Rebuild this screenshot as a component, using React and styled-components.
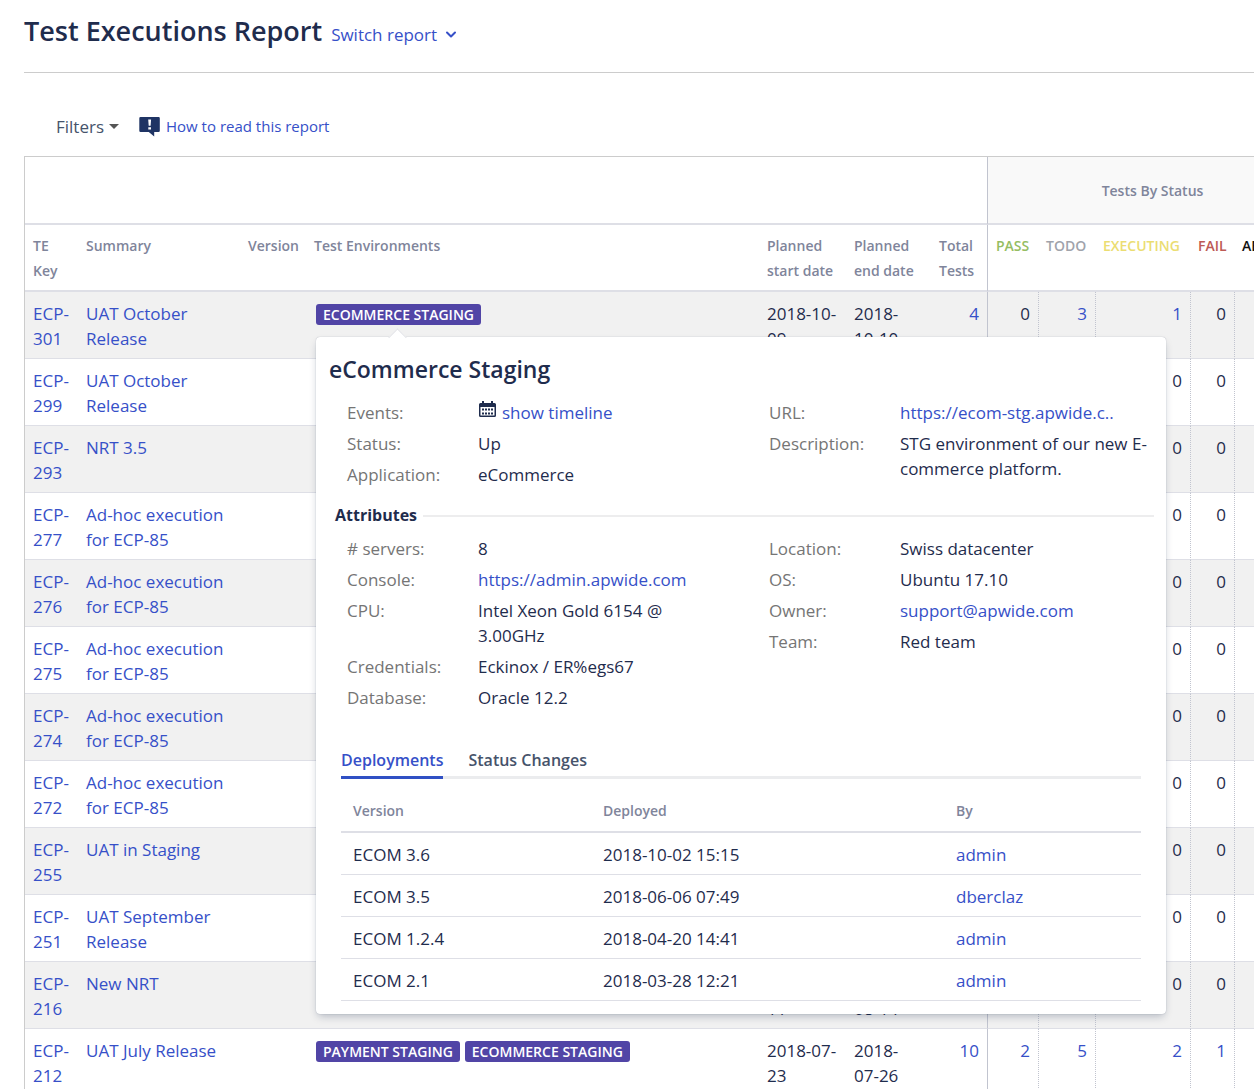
import React, { useState } from "react";
import styled, { createGlobalStyle } from "styled-components";

const color = {
  text: "#1f2c4d",
  link: "#3650c8",
  label: "#757575",
  head: "#7f859b",
  line: "#dedfe6",
  column: "#c1c4cf",
  stripe: "#f1f1f1",
  badge: "#5145a6",
};

const GlobalStyle = createGlobalStyle`
  *, *::before, *::after { box-sizing: border-box; }
  body {
    margin: 0;
    background: #fff;
    color: ${color.text};
    font: 17px/25px "Open Sans", "Noto Sans", sans-serif;
  }
`;

const Page = styled.main`
  height: 100vh;
  overflow-y: auto;
  scrollbar-width: none;
  padding-left: 24px;
`;

const Header = styled.header`
  display: flex;
  align-items: baseline;
  gap: 9px;
  height: 73px;
  padding-top: 13px;
  border-bottom: 1px solid #cccccc;
`;

const Title = styled.h1`
  margin: 0;
  font-size: 27px;
  line-height: 36px;
  font-weight: 600;
`;

const LinkButton = styled.button`
  display: inline-flex;
  align-items: center;
  gap: ${(p) => (p.$muted ? 5 : 8)}px;
  padding: 0;
  border: 0;
  background: none;
  font: inherit;
  color: ${(p) => (p.$muted ? "#46536b" : color.link)};
  cursor: pointer;
`;

const Link = styled.a`
  color: ${color.link};
  text-decoration: none;
  &:hover { text-decoration: underline; }
`;

const Toolbar = styled.div`
  display: flex;
  align-items: center;
  gap: 20px;
  padding: 41px 32px 17px;
`;

const HelpLink = styled(Link)`
  display: flex;
  align-items: center;
  gap: 6px;
  font-size: 15px;
`;

const Caret = styled.span`
  border: 5px solid transparent;
  border-top-color: #555;
  border-bottom: 0;
`;

const Scroller = styled.div`
  overflow-x: auto;
  scrollbar-width: none;
`;

const Report = styled.table`
  width: 100%;
  min-width: 1293px;
  table-layout: fixed;
  border-collapse: separate;
  border-spacing: 0;
  border-left: 1px solid #cccccc;
  border-top: 1px solid #cccccc;
`;

const Col = styled.col`
  width: ${(p) => (p.$w ? `${p.$w}px` : "auto")};
`;

const GroupHead = styled.th`
  height: 68px;
  padding: 0 8px;
  border-bottom: 2px solid ${color.line};
  border-left: ${(p) => (p.$filled ? `1px solid ${color.column}` : "0")};
  background: ${(p) => (p.$filled ? "#f9f9f9" : "#fff")};
  color: ${color.head};
  font-size: 14px;
  font-weight: 600;
`;

const Head = styled.th`
  padding: 8px 8px 7px;
  border-bottom: 2px solid ${color.line};
  border-left: ${(p) => (p.$first ? `1px solid ${color.column}` : "0")};
  color: ${(p) => p.$tone || color.head};
  font-size: 14px;
  font-weight: 600;
  text-align: left;
  vertical-align: top;
`;

const Row = styled.tr`
  &:nth-child(odd) { background: ${color.stripe}; }
`;

const Cell = styled.td`
  padding: 9px ${(p) => (p.$narrow ? 18 : 8)}px 7px 8px;
  border-bottom: 1px solid ${color.line};
  vertical-align: top;
`;

const NumberCell = styled(Cell)`
  text-align: right;
  border-left: ${(p) =>
    p.$edge === "solid" ? `1px solid ${color.column}` : p.$edge === "dotted" ? `1px dotted ${color.column}` : "0"};
`;

const Badges = styled.div`
  display: flex;
  gap: 5px;
  padding: 3px 2px;
`;

const BadgeWrap = styled.div`
  position: relative;
`;

const Badge = styled.button`
  display: block;
  height: 21px;
  padding: 0 7px;
  border: 0;
  border-radius: 3px;
  background: ${color.badge};
  color: #fff;
  font: 600 14px/21px "Open Sans", "Noto Sans", sans-serif;
  white-space: nowrap;
  cursor: pointer;
`;

const Popover = styled.section`
  position: absolute;
  z-index: 2;
  top: 33px;
  left: 0;
  width: 850px;
  padding: 16px 12px 13px 13px;
  border-radius: 4px;
  background: #fff;
  box-shadow: 0 4px 8px -2px rgba(9, 30, 66, 0.28), 0 0 1px rgba(9, 30, 66, 0.35);
  &::before {
    content: "";
    position: absolute;
    top: -6px;
    left: 75px;
    width: 13px;
    height: 13px;
    background: #fff;
    border: solid #e3e4e8;
    border-width: 1px 0 0 1px;
    transform: rotate(45deg);
  }
`;

const PopTitle = styled.h2`
  position: relative;
  margin: 0;
  font-size: 23px;
  line-height: 32px;
  font-weight: 600;
`;

const Columns = styled.div`
  display: grid;
  grid-template-columns: 422px 1fr;
  padding: ${(p) => (p.$top || 0)}px 0 0 18px;
`;

const Facts = styled.dl`
  display: grid;
  grid-template-columns: 131px 1fr;
  align-content: start;
  row-gap: 6px;
  margin: 0;
  padding-right: ${(p) => p.$pad || 0}px;
`;

const Term = styled.dt`
  color: ${color.label};
`;

const Fact = styled.dd`
  display: flex;
  align-items: flex-start;
  gap: 5px;
  margin: 0;
`;

const SectionHead = styled.h3`
  display: flex;
  align-items: center;
  gap: 6px;
  margin: 16px 0 0;
  padding-left: 6px;
  font-size: 16px;
  font-weight: 700;
  &::after {
    content: "";
    flex: 1;
    height: 2px;
    background: #ededee;
  }
`;

const Tabs = styled.div`
  display: flex;
  gap: 25px;
  margin: 36px 13px 0 12px;
  border-bottom: 3px solid #ebecee;
`;

const Tab = styled.button`
  height: 33px;
  margin-bottom: -3px;
  padding: 0 0 2px;
  border: 0;
  border-bottom: 3px solid ${(p) => (p.$active ? "#3050c4" : "transparent")};
  background: none;
  color: ${(p) => (p.$active ? color.link : "#46536b")};
  font: 600 16px/25px "Open Sans", "Noto Sans", sans-serif;
  cursor: pointer;
`;

const TabPanel = styled.div`
  padding: 0 13px 0 12px;
`;

const History = styled.table`
  width: 100%;
  table-layout: fixed;
  border-collapse: separate;
  border-spacing: 0;
`;

const HistoryHead = styled.th`
  width: ${(p) => p.$w};
  padding: 19px 12px 8px;
  border-bottom: 2px solid ${color.line};
  color: ${color.head};
  font-size: 14px;
  font-weight: 600;
  text-align: left;
`;

const HistoryCell = styled.td`
  padding: 9px 12px 7px;
  border-bottom: 1px solid ${color.line};
`;

const ChevronIcon = () => (
  <svg width="12" height="8" viewBox="0 0 12 8" fill="none" stroke="currentColor" strokeWidth="2" aria-hidden="true">
    <path d="M2 1.5 6 5.5 10 1.5" strokeLinecap="round" strokeLinejoin="round" />
  </svg>
);

const NoticeIcon = () => (
  <svg width="21" height="21" viewBox="0 0 21 21" aria-hidden="true">
    <path d="M1.5 1h18A1.2 1.2 0 0 1 20.8 2.2v12.6a1.2 1.2 0 0 1-1.2 1.2H15.200v4.600L9.800 16H1.500A1.2 1.2 0 0 1 .3 14.8V2.2A1.2 1.2 0 0 1 1.5 1z" fill="#1f3464" />
    <path d="M9.200 3.500h2.900l-.5 6.200H9.700zM9.300 11.200h2.700v2.300H9.300z" fill="#fff" />
  </svg>
);

const CalendarIcon = () => (
  <svg width="19" height="19" viewBox="0 0 19 19" aria-hidden="true">
    <path
      fillRule="evenodd"
      d="M4 3V1h2v2h7V1h2v2h1.500A1.500 1.500 0 0 1 18 4.500v11a1.500 1.500 0 0 1-1.500 1.500h-14A1.500 1.500 0 0 1 1 15.500v-11A1.500 1.500 0 0 1 2.500 3zM2.500 7v8.500h14V7z"
      fill={color.text}
    />
    {[8, 12].map((y) =>
      [4, 7, 10, 13].map((x) => <rect key={`${x}-${y}`} x={x} y={y + 0.5} width="2" height="2" fill={color.text} />)
    )}
  </svg>
);

const executions = [
  { id: "ECP-301", summary: "UAT October Release", envs: ["ECOMMERCE STAGING"], start: "2018-10-09", end: "2018-10-10", total: 4, counts: [0, 3, 1, 0, 0] },
  { id: "ECP-299", summary: "UAT October Release", envs: [], start: "2018-10-02", end: "2018-10-03", total: 4, counts: [4, 0, 0, 0, 0] },
  { id: "ECP-293", summary: "NRT 3.5", envs: [], start: "2018-09-25", end: "2018-09-26", total: 5, counts: [5, 0, 0, 0, 0] },
  { id: "ECP-277", summary: "Ad-hoc execution for ECP-85", envs: [], start: "2018-09-18", end: "2018-09-19", total: 1, counts: [1, 0, 0, 0, 0] },
  { id: "ECP-276", summary: "Ad-hoc execution for ECP-85", envs: [], start: "2018-09-18", end: "2018-09-19", total: 1, counts: [1, 0, 0, 0, 0] },
  { id: "ECP-275", summary: "Ad-hoc execution for ECP-85", envs: [], start: "2018-09-17", end: "2018-09-18", total: 1, counts: [1, 0, 0, 0, 0] },
  { id: "ECP-274", summary: "Ad-hoc execution for ECP-85", envs: [], start: "2018-09-17", end: "2018-09-18", total: 1, counts: [1, 0, 0, 0, 0] },
  { id: "ECP-272", summary: "Ad-hoc execution for ECP-85", envs: [], start: "2018-09-14", end: "2018-09-14", total: 1, counts: [1, 0, 0, 0, 0] },
  { id: "ECP-255", summary: "UAT in Staging", envs: [], start: "2018-09-10", end: "2018-09-11", total: 6, counts: [6, 0, 0, 0, 0] },
  { id: "ECP-251", summary: "UAT September Release", envs: [], start: "2018-09-04", end: "2018-09-05", total: 6, counts: [6, 0, 0, 0, 0] },
  { id: "ECP-216", summary: "New NRT", envs: [], start: "2018-08-11", end: "2018-08-14", total: 8, counts: [8, 0, 0, 0, 0] },
  { id: "ECP-212", summary: "UAT July Release", envs: ["PAYMENT STAGING", "ECOMMERCE STAGING"], start: "2018-07-23", end: "2018-07-26", total: 10, counts: [2, 5, 2, 1, 0] },
];

const statuses = [
  ["PASS", "#95bd62"],
  ["TODO", "#a0a3ab"],
  ["EXECUTING", "#ebdd72"],
  ["FAIL", "#bd5a55"],
  ["ABORTED", "#111111"],
];

const general = [
  [["Events", <><CalendarIcon /><Link href="#timeline">show timeline</Link></>], ["Status", "Up"], ["Application", "eCommerce"]],
  [["URL", <Link href="#ecom-stg">https://ecom-stg.apwide.c..</Link>], ["Description", "STG environment of our new E-commerce platform."]],
];

const attributes = [
  [
    ["# servers", "8"],
    ["Console", <Link href="#console">https://admin.apwide.com</Link>],
    ["CPU", "Intel Xeon Gold 6154 @ 3.00GHz"],
    ["Credentials", "Eckinox / ER%egs67"],
    ["Database", "Oracle 12.2"],
  ],
  [
    ["Location", "Swiss datacenter"],
    ["OS", "Ubuntu 17.10"],
    ["Owner", <Link href="#owner">support@apwide.com</Link>],
    ["Team", "Red team"],
  ],
];

const deployments = [
  ["ECOM 3.6", "2018-10-02 15:15", "admin"],
  ["ECOM 3.5", "2018-06-06 07:49", "dberclaz"],
  ["ECOM 1.2.4", "2018-04-20 14:41", "admin"],
  ["ECOM 2.1", "2018-03-28 12:21", "admin"],
];

const FactColumns = ({ groups, top }) => (
  <Columns $top={top}>
    {groups.map((items, i) => (
      <Facts key={i} $pad={i === 0 ? 80 : 0}>
        {items.map(([term, value]) => (
          <React.Fragment key={term}>
            <Term>{term}:</Term>
            <Fact>{value}</Fact>
          </React.Fragment>
        ))}
      </Facts>
    ))}
  </Columns>
);

function EnvironmentPopover() {
  const [tab, setTab] = useState("Deployments");
  return (
    <Popover aria-label="eCommerce Staging">
      <PopTitle>eCommerce Staging</PopTitle>
      <FactColumns groups={general} top={15} />
      <SectionHead>Attributes</SectionHead>
      <FactColumns groups={attributes} top={8} />
      <Tabs role="tablist">
        {["Deployments", "Status Changes"].map((name) => (
          <Tab key={name} role="tab" aria-selected={tab === name} $active={tab === name} onClick={() => setTab(name)}>
            {name}
          </Tab>
        ))}
      </Tabs>
      <TabPanel role="tabpanel">
        <History>
          <thead>
            <tr>
              <HistoryHead $w="250px">Version</HistoryHead>
              <HistoryHead $w="353px">Deployed</HistoryHead>
              <HistoryHead $w="auto">By</HistoryHead>
            </tr>
          </thead>
          <tbody>
            {deployments.map(([version, date, by]) => (
              <tr key={version}>
                <HistoryCell>{version}</HistoryCell>
                <HistoryCell>{date}</HistoryCell>
                <HistoryCell><Link href={`#${by}`}>{by}</Link></HistoryCell>
              </tr>
            ))}
          </tbody>
        </History>
      </TabPanel>
    </Popover>
  );
}

const Count = ({ id, value }) => (value ? <Link href={`#${id}`}>{value}</Link> : value);

export default function App() {
  return (
    <Page>
      <GlobalStyle />
      <Header>
        <Title>Test Executions Report</Title>
        <LinkButton type="button">Switch report <ChevronIcon /></LinkButton>
      </Header>
      <Toolbar>
        <LinkButton type="button" $muted>Filters <Caret /></LinkButton>
        <HelpLink href="#help"><NoticeIcon />How to read this report</HelpLink>
      </Toolbar>
      <Scroller>
        <Report>
          <colgroup>
            {[53, 162, 66, 0, 87, 85, 56, 51, 57, 95, 44, 83].map((w, i) => <Col key={i} $w={w} />)}
          </colgroup>
          <thead>
            <tr>
              <GroupHead as="td" colSpan={7} />
              <GroupHead colSpan={5} $filled>Tests By Status</GroupHead>
            </tr>
            <tr>
              {["TE Key", "Summary", "Version", "Test Environments", "Planned start date", "Planned end date", "Total Tests"].map((h) => (
                <Head key={h}>{h}</Head>
              ))}
              {statuses.map(([name, tone], i) => (
                <Head key={name} $tone={tone} $first={i === 0}>{name}</Head>
              ))}
            </tr>
          </thead>
          <tbody>
            {executions.map((row, r) => (
              <Row key={row.id}>
                <Cell><Link href={`#${row.id}`}>{row.id}</Link></Cell>
                <Cell><Link href={`#${row.id}`}>{row.summary}</Link></Cell>
                <Cell />
                <Cell>
                  <Badges>
                    {row.envs.map((env) => (
                      <BadgeWrap key={env}>
                        <Badge type="button">{env}</Badge>
                        {r === 0 && <EnvironmentPopover />}
                      </BadgeWrap>
                    ))}
                  </Badges>
                </Cell>
                <Cell>{row.start}</Cell>
                <Cell $narrow>{row.end}</Cell>
                <NumberCell><Count id={row.id} value={row.total} /></NumberCell>
                {row.counts.map((n, i) => (
                  <NumberCell key={i} $edge={i === 0 ? "solid" : "dotted"}><Count id={row.id} value={n} /></NumberCell>
                ))}
              </Row>
            ))}
          </tbody>
        </Report>
      </Scroller>
    </Page>
  );
}
